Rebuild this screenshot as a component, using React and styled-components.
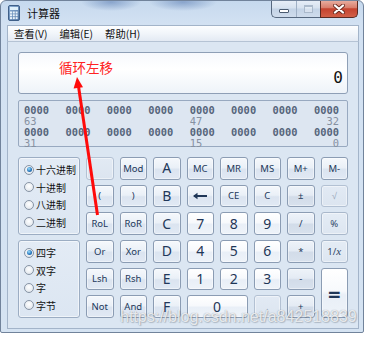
import React from 'react';
import styled, { createGlobalStyle, css } from 'styled-components';

const Global = createGlobalStyle`
  html, body { margin: 0; padding: 0; background: #ffffff; }
  body { font-family: "Noto Sans", "Noto Sans CJK SC", sans-serif; }
  * { box-sizing: border-box; }
`;

const Stage = styled.div`
  position: relative;
  width: 365px;
  height: 337px;
  overflow: hidden;
  background: #ffffff;
`;

const Window = styled.div`
  width: 364px;
  height: 333px;
  border: 1px solid #71839b;
  border-radius: 6px 6px 2px 2px;
  background:
    radial-gradient(ellipse 30px 9px at 110px 1px, rgba(95, 128, 180, 0.6), rgba(95, 128, 180, 0) 100%),
    radial-gradient(ellipse 34px 9px at 182px 1px, rgba(95, 128, 180, 0.6), rgba(95, 128, 180, 0) 100%),
    linear-gradient(180deg, #c6d9ee 0px, #d2e1f2 22px, #d5e3f2 100%);
  display: flex;
  flex-direction: column;
  padding: 0 4px 4px 6px;
  overflow: hidden;
`;

const TitleBar = styled.div`
  height: 24px;
  display: flex;
  align-items: flex-start;
  flex: none;
`;

const AppIcon = styled.svg`
  margin: 4px 0 0 1px;
  flex: none;
`;

const Title = styled.span`
  margin-left: 7px;
  line-height: 24px;
  font-size: 11px;
  color: #111;
  font-family: "Noto Sans CJK SC", sans-serif;
`;

const Captions = styled.div`
  margin-left: auto;
  margin-right: 1px;
  margin-top: -1px;
  display: flex;
`;

const CapGroup = styled.div`
  display: flex;
  height: 18px;
  border: 1px solid #56687f;
  border-top: none;
  border-right: none;
  border-radius: 0 0 0 5px;
  overflow: hidden;
  background: linear-gradient(180deg, #e8eff8 0%, #d6e2ef 48%, #c3d3e6 52%, #cfdcec 100%);
`;

const CapButton = styled.div`
  width: 24px;
  display: flex;
  align-items: center;
  justify-content: center;
  & + & { border-left: 1px solid #9fb0c5; }
`;

const CloseButton = styled.div`
  width: 38px;
  height: 18px;
  border: 1px solid #5b2a22;
  border-top: none;
  border-radius: 0 0 5px 0;
  background: linear-gradient(180deg, #eab2a5 0%, #d9806e 44%, #c5432f 52%, #d26048 100%);
  display: flex;
  align-items: center;
  justify-content: center;
`;

const MinGlyph = styled.div`
  width: 10px;
  height: 4px;
  margin-top: 5px;
  background: #fff;
  border: 1px solid #4a5b70;
  border-radius: 1px;
`;

const MaxGlyph = styled.div`
  width: 9px;
  height: 8px;
  border: 1px solid #a7b6c8;
  border-top-width: 2px;
  background: rgba(255, 255, 255, 0.35);
  opacity: 0.9;
`;

const MenuBar = styled.div`
  height: 17px;
  flex: none;
  display: flex;
  align-items: center;
  gap: 12px;
  padding-left: 6px;
  border: 1px solid #a3b4c9;
  border-bottom-color: #b5c3d4;
  background: linear-gradient(180deg, #fdfeff 0%, #f1f5fa 50%, #e3eaf3 100%);
  font-size: 10.3px;
  color: #111;
  font-family: "Noto Sans CJK SC", sans-serif;
`;

const MenuItem = styled.span`
  line-height: 15px;
`;

const Client = styled.div`
  flex: 1;
  display: flex;
  flex-direction: column;
  padding: 10px 10px 10px 10px;
  background: #dbe6f2;
  border-left: 1px solid #a3b4c9;
  border-right: 1px solid #a3b4c9;
  border-bottom: 1px solid #a3b4c9;
`;

const Display = styled.div`
  height: 42px;
  flex: none;
  border: 1px solid #8e9fb6;
  border-radius: 3px;
  background: linear-gradient(180deg, #f7f9fd 0%, #ffffff 40%, #eef3f9 100%);
  display: flex;
  align-items: flex-end;
  justify-content: flex-end;
  padding: 0 4px 7px 0;
`;

const DisplayValue = styled.span`
  font-family: "DejaVu Sans Mono", monospace;
  font-size: 16px;
  line-height: 16px;
  color: #111;
`;

const BinaryPanel = styled.div`
  height: 47px;
  flex: none;
  margin-top: 6px;
  border: 1px solid #98a9c0;
  border-radius: 2px;
  background: #dde6f1;
  padding: 4px 8px 0 5px;
  font-family: "DejaVu Sans Mono", monospace;
  font-size: 10.4px;
  line-height: 11px;
`;

const BinaryRow = styled.div`
  display: grid;
  grid-template-columns: repeat(8, 25px);
  justify-content: space-between;
  color: ${p => (p.$label ? '#8691a1' : '#56657b')};
  font-weight: ${p => (p.$label ? 'normal' : 'bold')};
`;

const BinaryCell = styled.span`
  justify-self: ${p => (p.$end ? 'end' : 'start')};
  white-space: nowrap;
`;

const Keypad = styled.div`
  margin-top: 10px;
  height: 161px;
  flex: none;
  display: grid;
  grid-template-columns: 62px repeat(8, 1fr);
  grid-template-rows: repeat(6, 1fr);
  column-gap: 6px;
  row-gap: 5px;
`;

const RadioGroup = styled.div`
  grid-column: 1;
  grid-row: span 3;
  border: 1px solid #9cadc3;
  border-radius: 3px;
  background: linear-gradient(180deg, #e3ebf5, #dce6f2);
  box-shadow: inset 0 0 0 1px rgba(255, 255, 255, 0.55);
  display: flex;
  flex-direction: column;
  justify-content: center;
  padding: 0 0 0 5px;
`;

const RadioRow = styled.label`
  height: 17.4px;
  display: flex;
  align-items: center;
  font-size: 10px;
  color: #111;
  font-family: "Noto Sans CJK SC", sans-serif;
`;

const RadioDot = styled.span`
  width: 10px;
  height: 10px;
  border-radius: 50%;
  border: 1px solid #8794a5;
  background: radial-gradient(circle at 50% 40%, #ffffff 0%, #e9edf2 60%, #d0d7e0 100%);
  margin-right: 2px;
  display: flex;
  align-items: center;
  justify-content: center;
  flex: none;
  &::after {
    content: '';
    width: 5px;
    height: 5px;
    border-radius: 50%;
    display: ${p => (p.$on ? 'block' : 'none')};
    background: radial-gradient(circle at 40% 35%, #9fe0ff 0%, #2b7bc0 55%, #164a80 100%);
  }
`;

const kinds = {
  normal: css`
    background: linear-gradient(180deg, #f5f8fc 0%, #eaf0f7 46%, #dbe4f0 54%, #e1e9f4 100%);
    border-color: #8b9cb3;
    color: #22385a;
  `,
  digit: css`
    background: linear-gradient(180deg, #ffffff 0%, #f7f9fc 46%, #e9eff7 54%, #eef3f9 100%);
    border-color: #8b9cb3;
    color: #1f3657;
  `,
  op: css`
    background: linear-gradient(180deg, #eef3f9 0%, #e4ebf4 46%, #d2dce9 54%, #d8e1ed 100%);
    border-color: #8b9cb3;
    color: #22385a;
  `,
  flat: css`
    background: linear-gradient(180deg, #e4ecf5 0%, #dde6f1 100%);
    border-color: #a9b8cb;
    color: #2f4668;
  `,
  off: css`
    background: linear-gradient(180deg, #e2eaf4 0%, #dce5f0 100%);
    border-color: #b3c1d3;
    color: #9aa8bb;
  `,
};

const Key = styled.button`
  margin: 0;
  padding: 0;
  border: 1px solid;
  border-radius: 3px;
  box-shadow: inset 0 0 0 1px rgba(255, 255, 255, 0.45);
  display: flex;
  align-items: center;
  justify-content: center;
  font-family: "Noto Sans", sans-serif;
  font-size: ${p => (p.$big ? '14px' : p.$huge ? '22px' : '9.5px')};
  font-weight: ${p => (p.$huge ? 'bold' : 'normal')};
  line-height: 1;
  grid-column: ${p => (p.$wide ? 'span 2' : 'auto')};
  grid-row: ${p => (p.$tall ? 'span 2' : 'auto')};
  ${p => kinds[p.$kind || 'normal']}
`;

const Italic = styled.i`
  font-family: "Liberation Serif", serif;
  font-size: 11px;
`;

const Overlay = styled.svg`
  position: absolute;
  left: 0;
  top: 0;
  pointer-events: none;
`;

const Note = styled.div`
  position: absolute;
  left: 59px;
  top: 61px;
  font-family: "Noto Sans CJK SC", sans-serif;
  font-size: 13.5px;
  line-height: 1;
  color: #ff2323;
`;

const Watermark = styled.div`
  position: absolute;
  left: 120px;
  top: 309px;
  font-family: "Liberation Sans", sans-serif;
  font-size: 16px;
  line-height: 16px;
  color: rgba(255, 255, 255, 0.8);
  text-shadow: 0 0 1px rgba(90, 100, 115, 0.6), 1px 1px 1px rgba(60, 70, 85, 0.25);
  white-space: nowrap;
`;

const BackArrow = () => (
  <svg width="16" height="8" viewBox="0 0 16 8">
    <path d="M2 4 H15" stroke="#1f3657" strokeWidth="1.8" />
    <path d="M1 4 L5.5 0.8 L5.5 7.2 Z" fill="#1f3657" />
  </svg>
);

const CalcIcon = () => (
  <AppIcon width="12" height="16" viewBox="0 0 12 16">
    <defs>
      <linearGradient id="ci" x1="0" y1="0" x2="1" y2="1">
        <stop offset="0" stopColor="#8fb0d6" />
        <stop offset="1" stopColor="#4e74a3" />
      </linearGradient>
    </defs>
    <rect x="0.5" y="0.5" width="11" height="15" rx="1.5" fill="url(#ci)" stroke="#3f5f88" />
    <rect x="2" y="2" width="8" height="3" fill="#dff0fb" />
    {[0, 1, 2].map(r =>
      [0, 1, 2].map(c => (
        <rect key={`${r}${c}`} x={2 + c * 2.8} y={6.5 + r * 2.8} width="2" height="2" fill="#eaf3fb" />
      ))
    )}
  </AppIcon>
);

const CloseGlyph = () => (
  <svg width="12" height="10" viewBox="0 0 12 10">
    <path d="M2 1.5 L10 8.5 M10 1.5 L2 8.5" stroke="#6a2a20" strokeWidth="4" strokeLinecap="round" />
    <path d="M2 1.5 L10 8.5 M10 1.5 L2 8.5" stroke="#ffffff" strokeWidth="2.3" strokeLinecap="round" />
  </svg>
);

const bin = '0000';

const keys = [
  [{ t: '', k: 'off' }, { t: 'Mod' }, { t: 'A', big: 1 }, { t: 'MC' }, { t: 'MR' }, { t: 'MS' }, { t: 'M+' }, { t: 'M-' }],
  [{ t: '(' }, { t: ')' }, { t: 'B', big: 1 }, { t: 'back' }, { t: 'CE' }, { t: 'C' }, { t: '±', k: 'op' }, { t: '√', k: 'off' }],
  [{ t: 'RoL' }, { t: 'RoR' }, { t: 'C', big: 1 }, { t: '7', k: 'digit', big: 1 }, { t: '8', k: 'digit', big: 1 }, { t: '9', k: 'digit', big: 1 }, { t: '/', k: 'op' }, { t: '%', k: 'flat' }],
  [{ t: 'Or' }, { t: 'Xor' }, { t: 'D', big: 1 }, { t: '4', k: 'digit', big: 1 }, { t: '5', k: 'digit', big: 1 }, { t: '6', k: 'digit', big: 1 }, { t: '*', k: 'op' }, { t: 'inv', k: 'flat' }],
  [{ t: 'Lsh' }, { t: 'Rsh' }, { t: 'E', big: 1 }, { t: '1', k: 'digit', big: 1 }, { t: '2', k: 'digit', big: 1 }, { t: '3', k: 'digit', big: 1 }, { t: '-', k: 'op' }, { t: '=', k: 'digit', huge: 1, tall: 1 }],
  [{ t: 'Not' }, { t: 'And' }, { t: 'F', big: 1 }, { t: '0', k: 'digit', big: 1, wide: 1 }, { t: '.', k: 'off' }, { t: '+', k: 'op' }],
];

const label = t => {
  if (t === 'back') return <BackArrow />;
  if (t === 'inv') return <span>1/<Italic>x</Italic></span>;
  return t;
};

const bases = ['十六进制', '十进制', '八进制', '二进制'];
const words = ['四字', '双字', '字', '字节'];

export default function App() {
  return (
    <Stage>
      <Global />
      <Window>
        <TitleBar>
          <CalcIcon />
          <Title>计算器</Title>
          <Captions>
            <CapGroup>
              <CapButton><MinGlyph /></CapButton>
              <CapButton><MaxGlyph /></CapButton>
            </CapGroup>
            <CloseButton><CloseGlyph /></CloseButton>
          </Captions>
        </TitleBar>
        <MenuBar>
          <MenuItem>查看(V)</MenuItem>
          <MenuItem>编辑(E)</MenuItem>
          <MenuItem>帮助(H)</MenuItem>
        </MenuBar>
        <Client>
          <Display>
            <DisplayValue>0</DisplayValue>
          </Display>
          <BinaryPanel>
            <BinaryRow>{Array.from({ length: 8 }, (_, i) => <BinaryCell key={i}>{bin}</BinaryCell>)}</BinaryRow>
            <BinaryRow $label>
              <BinaryCell>63</BinaryCell><span /><span /><span />
              <BinaryCell>47</BinaryCell><span /><span />
              <BinaryCell $end>32</BinaryCell>
            </BinaryRow>
            <BinaryRow>{Array.from({ length: 8 }, (_, i) => <BinaryCell key={i}>{bin}</BinaryCell>)}</BinaryRow>
            <BinaryRow $label>
              <BinaryCell>31</BinaryCell><span /><span /><span />
              <BinaryCell>15</BinaryCell><span /><span />
              <BinaryCell $end>0</BinaryCell>
            </BinaryRow>
          </BinaryPanel>
          <Keypad>
            {keys.map((row, r) => (
              <React.Fragment key={r}>
                {r === 0 && (
                  <RadioGroup>
                    {bases.map((b, i) => (
                      <RadioRow key={b}><RadioDot $on={i === 0} />{b}</RadioRow>
                    ))}
                  </RadioGroup>
                )}
                {r === 3 && (
                  <RadioGroup>
                    {words.map((w, i) => (
                      <RadioRow key={w}><RadioDot $on={i === 0} />{w}</RadioRow>
                    ))}
                  </RadioGroup>
                )}
                {row.map((k, c) => (
                  <Key key={c} $kind={k.k} $big={k.big} $huge={k.huge} $wide={k.wide} $tall={k.tall}>
                    {label(k.t)}
                  </Key>
                ))}
              </React.Fragment>
            ))}
          </Keypad>
        </Client>
      </Window>
      <Note>循环左移</Note>
      <Overlay width="365" height="337" viewBox="0 0 365 337">
        <path d="M97.5 215 L78.6 87" stroke="#ff0a0a" strokeWidth="3" />
        <path d="M77 77 L83 87.2 L73.6 88.5 Z" fill="#ff0a0a" />
      </Overlay>
      <Watermark>https://blog.csdn.net/a842518839</Watermark>
    </Stage>
  );
}
